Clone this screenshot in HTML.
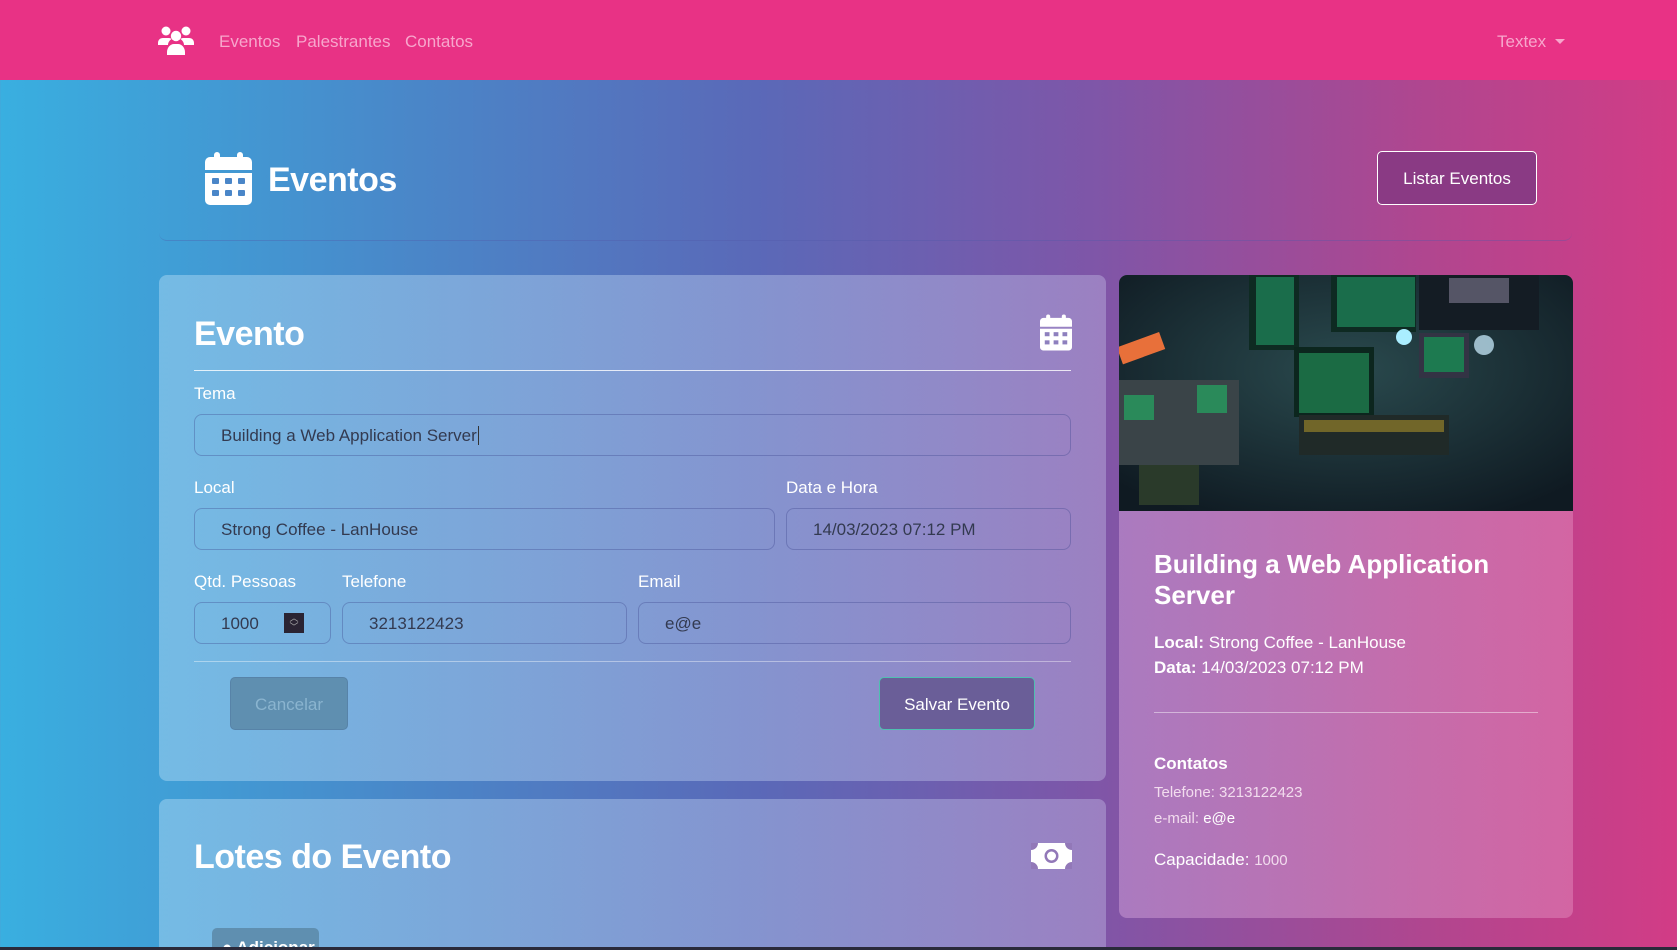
<!DOCTYPE html>
<html><head><meta charset="utf-8"><style>
*{box-sizing:border-box;margin:0;padding:0}
html,body{width:1677px;height:950px;overflow:hidden}
body{font-family:"Liberation Sans",sans-serif;background:linear-gradient(90deg,#39afe0 0%,#4a86c8 25%,#5a69b8 45%,#7e56a8 65%,#b0468f 85%,#d23c86 100%);position:relative;color:#fff}
.nav{position:absolute;left:0;top:0;width:1677px;height:80px;background:#e83285}
.nav a{position:absolute;top:32px;font-size:17px;color:#f7a6cc}
.abs{position:absolute}
.hdr{position:absolute;left:159px;top:90px;width:1413px;height:151px;border-bottom:1px solid rgba(80,90,170,.35);border-radius:8px}
.card{position:absolute;background:rgba(255,255,255,.28);border-radius:8px}
.lbl{position:absolute;font-size:17px;color:#fff}
.inp{position:absolute;border:1px solid rgba(60,70,140,.35);border-radius:8px;height:42px;font-size:17px;color:#333a50;padding:11px 0 0 26px}
.hr{position:absolute;height:1px;background:rgba(255,255,255,.6)}
.btn{position:absolute;border-radius:5px;font-size:17px;text-align:center}
</style></head><body>
<div class="nav">
<svg class="abs" style="left:158px;top:26px" width="36" height="29" viewBox="0 0 36 29"><g fill="#fff"><circle cx="8" cy="5" r="4.5"/><circle cx="28" cy="5" r="4.5"/><circle cx="18" cy="10" r="5.2"/><path d="M0 17c0-3 2-5 5-5h6c1 0 2 .5 2.5 1-2 1.5-3.5 3.5-3.5 6H0z"/><path d="M36 17c0-3-2-5-5-5h-6c-1 0-2 .5-2.5 1 2 1.5 3.5 3.5 3.5 6h10z"/><path d="M9 26c0-4 3-8 7-8h4c4 0 7 4 7 8v3H9z"/></g></svg>
<a style="left:219px">Eventos</a><a style="left:296px">Palestrantes</a><a style="left:405px">Contatos</a>
<a style="left:1497px">Textex <span style="display:inline-block;border:5px solid transparent;border-top-color:#f7a6cc;vertical-align:-2px;margin-left:4px"></span></a>
</div>
<div class="hdr"></div>
<svg class="abs" style="left:205px;top:152px" width="47" height="53" viewBox="0 0 47 53"><g fill="#fff"><rect x="9" y="0" width="6" height="11" rx="3"/><rect x="32" y="0" width="6" height="11" rx="3"/><path d="M0 10a5 5 0 0 1 5-5h37a5 5 0 0 1 5 5v8H0z"/><path d="M0 21h47v27a5 5 0 0 1-5 5H5a5 5 0 0 1-5-5z"/></g><g fill="#4a86c8"><rect x="7" y="26" width="7" height="6" rx="1"/><rect x="20" y="26" width="7" height="6" rx="1"/><rect x="33" y="26" width="7" height="6" rx="1"/><rect x="7" y="38" width="7" height="6" rx="1"/><rect x="20" y="38" width="7" height="6" rx="1"/><rect x="33" y="38" width="7" height="6" rx="1"/></g></svg>
<div class="abs" style="left:268px;top:161px;font-size:34px;font-weight:bold;letter-spacing:-0.5px">Eventos</div>
<div class="btn" style="left:1377px;top:151px;width:160px;height:54px;border:1px solid #fff;background:#8a3a84;padding-top:17px;color:#fff">Listar Eventos</div>

<div class="card" style="left:159px;top:275px;width:947px;height:506px;background:linear-gradient(90deg,rgba(160,210,240,.55),rgba(190,180,225,.45))"></div>
<div class="abs" style="left:194px;top:315px;font-size:34px;font-weight:bold;letter-spacing:-0.5px">Evento</div>
<svg class="abs" style="left:1040px;top:314px" width="32" height="37" viewBox="0 0 47 53"><g fill="#fff"><rect x="9" y="0" width="6" height="11" rx="3"/><rect x="32" y="0" width="6" height="11" rx="3"/><path d="M0 10a5 5 0 0 1 5-5h37a5 5 0 0 1 5 5v8H0z"/><path d="M0 21h47v27a5 5 0 0 1-5 5H5a5 5 0 0 1-5-5z"/></g><g fill="#8e80be"><rect x="7" y="26" width="7" height="6"/><rect x="20" y="26" width="7" height="6"/><rect x="33" y="26" width="7" height="6"/><rect x="7" y="38" width="7" height="6"/><rect x="20" y="38" width="7" height="6"/><rect x="33" y="38" width="7" height="6"/></g></svg>
<div class="hr" style="left:194px;top:370px;width:877px;background:rgba(255,255,255,.8)"></div>
<div class="lbl" style="left:194px;top:384px">Tema</div>
<div class="inp" style="left:194px;top:414px;width:877px">Building a Web Application Server<span style="border-left:1px solid #333;margin-left:1px"></span></div>
<div class="lbl" style="left:194px;top:478px">Local</div>
<div class="lbl" style="left:786px;top:478px">Data e Hora</div>
<div class="inp" style="left:194px;top:508px;width:581px">Strong Coffee - LanHouse</div>
<div class="inp" style="left:786px;top:508px;width:285px">14/03/2023 07:12 PM</div>
<div class="lbl" style="left:194px;top:572px">Qtd. Pessoas</div>
<div class="lbl" style="left:342px;top:572px">Telefone</div>
<div class="lbl" style="left:638px;top:572px">Email</div>
<div class="inp" style="left:194px;top:602px;width:137px">1000</div>
<div class="abs" style="left:284px;top:613px;width:20px;height:20px;background:#2a2433;color:#aaa;font-size:9px;line-height:9px;text-align:center;padding-top:1px">︿<br>﹀</div>
<div class="inp" style="left:342px;top:602px;width:285px">3213122423</div>
<div class="inp" style="left:638px;top:602px;width:433px">e@e</div>
<div class="hr" style="left:194px;top:661px;width:877px;background:rgba(255,255,255,.4)"></div>
<div class="btn" style="left:230px;top:677px;width:118px;height:53px;background:#5f8fb0;color:#8ab4cf;padding-top:17px;border:1px solid rgba(80,120,160,.5)">Cancelar</div>
<div class="btn" style="left:879px;top:677px;width:156px;height:53px;background:#6a5e98;color:#fff;padding-top:17px;border:1px solid #4fc0b0">Salvar Evento</div>

<div class="card" style="left:159px;top:799px;width:947px;height:160px;background:linear-gradient(90deg,rgba(160,210,240,.55),rgba(190,180,225,.45))"></div>
<div class="abs" style="left:194px;top:838px;font-size:34px;font-weight:bold;letter-spacing:-0.5px">Lotes do Evento</div>
<svg class="abs" style="left:1031px;top:840px" width="41" height="32" viewBox="0 0 41 32"><path fill="#fff" d="M0 3h41v26H0z"/><circle cx="20.5" cy="16" r="7" fill="#9278b8"/><path d="M0 3h7a7 7 0 0 1-7 7zM41 3h-7a7 7 0 0 0 7 7zM0 29h7a7 7 0 0 0-7-7zM41 29h-7a7 7 0 0 1 7-7z" fill="#9278b8"/><circle cx="20.5" cy="16" r="4.5" fill="#fff"/></svg>
<div class="btn" style="left:212px;top:928px;width:107px;height:30px;background:#5f8fb0;color:#fff;font-weight:bold;text-align:left;padding:10px 0 0 10px">● Adicionar</div>
<div class="abs" style="left:0;top:947px;width:1677px;height:3px;background:#2a2a3a"></div>

<div class="card" style="left:1119px;top:275px;width:454px;height:643px;background:linear-gradient(90deg,rgba(230,180,230,.4),rgba(240,170,210,.35));overflow:hidden">
<svg width="454" height="236" viewBox="0 0 454 236" style="display:block">
<defs><radialGradient id="g" cx=".5" cy=".4" r=".7"><stop offset="0" stop-color="#2a4a4e"/><stop offset="1" stop-color="#0f1a22"/></radialGradient></defs>
<rect width="454" height="236" fill="url(#g)"/>
<rect x="130" y="0" width="50" height="75" fill="#0e2a22"/><rect x="137" y="2" width="38" height="68" fill="#1f8a5c" opacity=".7"/>
<rect x="212" y="0" width="85" height="57" fill="#0e2a22"/><rect x="218" y="2" width="78" height="50" fill="#1f8a5c" opacity=".7"/>
<rect x="300" y="0" width="120" height="55" fill="#141c24"/><rect x="330" y="3" width="60" height="25" fill="#556"/>
<rect x="175" y="72" width="80" height="70" fill="#0c261e"/><rect x="180" y="78" width="70" height="60" fill="#27995e" opacity=".6"/>
<rect x="300" y="58" width="50" height="45" fill="#334"/><rect x="305" y="62" width="40" height="35" fill="#1d7a50"/>
<rect x="0" y="105" width="120" height="85" fill="#3a4448"/><rect x="5" y="120" width="30" height="25" fill="#2a8a5a"/><rect x="78" y="110" width="30" height="28" fill="#2a8a5a"/>
<rect x="180" y="140" width="150" height="40" fill="#202a28"/><rect x="185" y="145" width="140" height="12" fill="#a8902a" opacity=".6"/>
<rect x="0" y="65" width="45" height="18" fill="#e8703a" transform="rotate(-20 20 75)"/>
<circle cx="285" cy="62" r="8" fill="#aef"/><circle cx="365" cy="70" r="10" fill="#bde" opacity=".8"/>
<rect x="20" y="190" width="60" height="40" fill="#2a3a2a"/>
</svg>
</div>
<div class="abs" style="left:1154px;top:549px;font-size:26px;font-weight:bold;line-height:31px;width:370px">Building a Web Application Server</div>
<div class="abs" style="left:1154px;top:630px;font-size:17px;line-height:25px"><b>Local:</b> Strong Coffee - LanHouse<br><b>Data:</b> 14/03/2023 07:12 PM</div>
<div class="hr" style="left:1154px;top:712px;width:384px;background:rgba(255,255,255,.45)"></div>
<div class="abs" style="left:1154px;top:754px;font-size:17px;font-weight:bold">Contatos</div>
<div class="abs" style="left:1154px;top:780px;font-size:15px;line-height:26px;color:#f2dcee">Telefone: 3213122423<br>e-mail: <span style="color:#fff">e@e</span></div>
<div class="abs" style="left:1154px;top:850px;font-size:17px">Capacidade: <span style="font-size:15px;color:#f2dcee">1000</span></div>
</body></html>
